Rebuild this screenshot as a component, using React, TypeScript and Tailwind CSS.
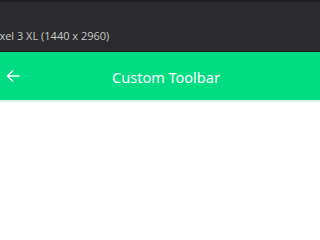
import React from "react";

export default function App() {
  return (
    <div className="w-[320px] h-[207px] overflow-hidden bg-white flex flex-col">
      <div className="h-[2px] bg-[#1f1f21]" />
      <div className="h-[49px] bg-[#2b2b2d] flex items-end pb-[7px] overflow-hidden">
        <span
          className="ml-[-10px] whitespace-nowrap text-[11px] leading-[16px] text-[#c9c9c9]"
          style={{ fontFamily: '"Open Sans", "Noto Sans", sans-serif' }}
        >
          Pixel 3 XL (1440 x 2960)
        </span>
      </div>
      <div className="h-[1px] bg-[#1b1b1b]" />
      <div className="h-[48px] bg-[#00dc82] flex items-center relative">
        <svg
          className="absolute left-[6px] top-[17px]"
          width="14"
          height="14"
          viewBox="0 0 14 14"
          fill="none"
          stroke="white"
          strokeWidth="1.6"
        >
          <path d="M13.5 7H1.5M7 1.5L1.5 7L7 12.5" />
        </svg>
        <div
          className="w-full text-center text-white text-[14.5px] leading-[20px] pl-[12px] pt-[2px]"
          style={{ fontFamily: '"Noto Sans", "Open Sans", sans-serif' }}
        >
          Custom Toolbar
        </div>
      </div>
      <div className="h-[2px] bg-[#dff6ec]" />
      <div className="flex-1 bg-white" />
    </div>
  );
}
